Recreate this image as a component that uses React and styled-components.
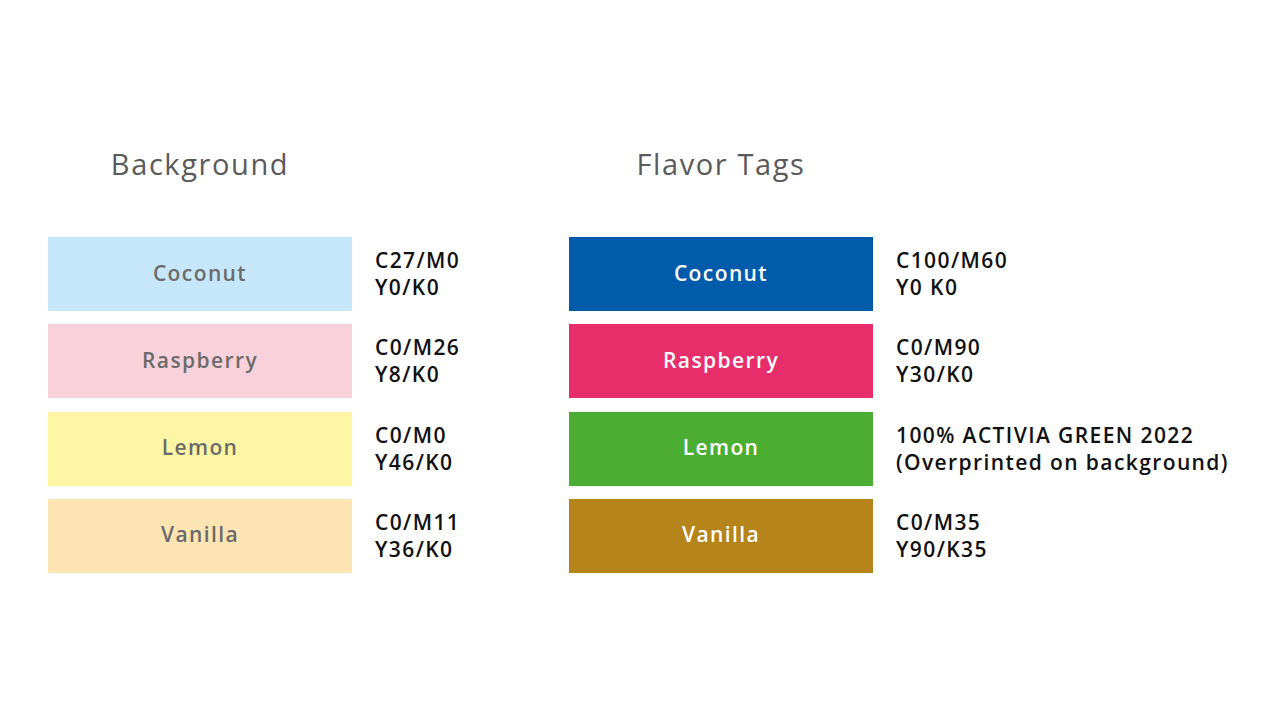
import React from "react";
import styled, { createGlobalStyle } from "styled-components";

const Global = createGlobalStyle`
  html, body { margin: 0; padding: 0; background: #ffffff; }
  body { font-family: "Open Sans", "Liberation Sans", sans-serif; }
`;

const Page = styled.div`
  width: 1280px;
  height: 720px;
  box-sizing: border-box;
  padding: 145px 0 0 48px;
  display: grid;
  grid-template-columns: 521px auto;
  align-items: start;
`;

const Group = styled.section`
  display: flex;
  flex-direction: column;
`;

const Heading = styled.h2`
  width: 304px;
  margin: 0 0 54px;
  text-align: center;
  font-family: "Open Sans", "Liberation Sans", sans-serif;
  font-weight: 400;
  font-size: 29px;
  line-height: 38px;
  letter-spacing: 1.6px;
  color: #5a5a5a;
`;

const List = styled.div`
  display: flex;
  flex-direction: column;
  gap: 13.3px;
`;

const Row = styled.div`
  display: flex;
  align-items: center;
`;

const Swatch = styled.div`
  width: 304px;
  height: 74px;
  flex: none;
  display: flex;
  align-items: center;
  justify-content: center;
  padding-bottom: 3px;
  box-sizing: border-box;
  background: ${(p) => p.$bg};
  color: ${(p) => (p.$dark ? "#ffffff" : "#6b6b6b")};
  font-family: "Open Sans", "Liberation Sans", sans-serif;
  font-weight: 600;
  font-size: 21px;
  letter-spacing: 1.4px;
`;

const Code = styled.div`
  margin-left: 23px;
  font-family: "Open Sans", "Liberation Sans", sans-serif;
  font-weight: 600;
  font-size: 21px;
  line-height: 27px;
  letter-spacing: 1.4px;
  color: #111111;
  white-space: nowrap;
`;

const background = [
  { name: "Coconut", bg: "#c6e6f9", code: ["C27/M0", "Y0/K0"] },
  { name: "Raspberry", bg: "#f8d1da", code: ["C0/M26", "Y8/K0"] },
  { name: "Lemon", bg: "#fef6a5", code: ["C0/M0", "Y46/K0"] },
  { name: "Vanilla", bg: "#fde4b3", code: ["C0/M11", "Y36/K0"] },
];

const flavor = [
  { name: "Coconut", bg: "#005bab", code: ["C100/M60", "Y0 K0"] },
  { name: "Raspberry", bg: "#e82d6b", code: ["C0/M90", "Y30/K0"] },
  { name: "Lemon", bg: "#4bae33", code: ["100% ACTIVIA GREEN 2022", "(Overprinted on background)"] },
  { name: "Vanilla", bg: "#b5841a", code: ["C0/M35", "Y90/K35"] },
];

function ColorGroup({ title, items, dark }) {
  return (
    <Group>
      <Heading>{title}</Heading>
      <List>
        {items.map((it) => (
          <Row key={it.name}>
            <Swatch $bg={it.bg} $dark={dark}>{it.name}</Swatch>
            <Code>
              {it.code[0]}
              <br />
              {it.code[1]}
            </Code>
          </Row>
        ))}
      </List>
    </Group>
  );
}

export default function App() {
  return (
    <>
      <Global />
      <Page>
        <ColorGroup title="Background" items={background} />
        <ColorGroup title="Flavor Tags" items={flavor} dark />
      </Page>
    </>
  );
}
